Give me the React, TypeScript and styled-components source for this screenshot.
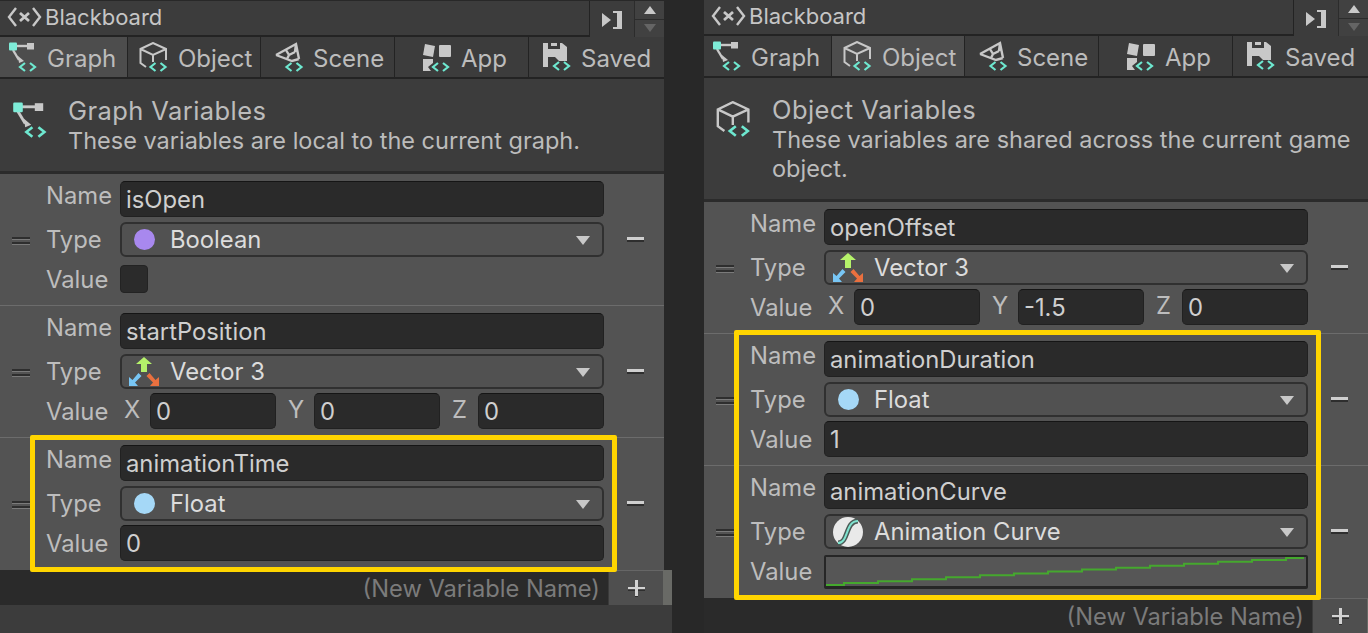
import React from "react";
import styled, { createGlobalStyle } from "styled-components";

const Global = createGlobalStyle`
  html, body { margin: 0; padding: 0; background: #282828; }
  body { font-family: Inter, "Liberation Sans", sans-serif; }
`;

const Page = styled.div`
  width: 1368px;
  height: 633px;
  display: flex;
  gap: 32px;
  overflow: hidden;
  background: #282828;
`;

const Panel = styled.section<{ $first?: boolean }>`
  width: 672px;
  flex: none;
  height: 633px;
  display: flex;
  flex-direction: column;
  padding-top: ${(p) => (p.$first ? "1px" : "0")};
  box-sizing: border-box;
`;

const TopBar = styled.header`
  width: 664px;
  height: 36px;
  display: flex;
  background: #3c3c3c;
  flex: none;
`;

const TitleBox = styled.div`
  width: 589px;
  height: 32px;
  border-right: 1px solid #232323;
  border-bottom: 2px solid #232323;
  display: flex;
  align-items: center;
  padding-bottom: 2px;
`;

const TitleInner = styled.div`
  display: flex;
  align-items: center;
  gap: 3px;
  padding-left: 7px;
  color: #c6c6c6;
  font-size: 22px;
`;

const CollapseSlot = styled.div`
  width: 44px;
  display: flex;
  align-items: center;
  justify-content: center;
  padding-top: 1px;
  padding-left: 1px;
  box-sizing: border-box;
`;

const Stepper = styled.div`
  width: 30px;
  display: flex;
  flex-direction: column;
  gap: 1px;
  background: #2c2c2c;
  padding-left: 1px;
  box-sizing: border-box;
`;

const StepBtn = styled.div<{ $down?: boolean }>`
  flex: 1;
  background: #414141;
  display: flex;
  align-items: center;
  justify-content: center;
  &::after {
    content: "";
    width: 0;
    height: 0;
    border-left: 6.5px solid transparent;
    border-right: 6.5px solid transparent;
    ${(p) => (p.$down ? "border-top: 8px solid #656565;" : "border-bottom: 8px solid #c9c9c9;")}
  }
`;

const TabRow = styled.nav`
  width: 664px;
  height: 42px;
  flex: none;
  display: grid;
  grid-template-columns: 127px 132px 133px 133px 135px;
  column-gap: 1px;
  background: #232323;
  padding-bottom: 2px;
  box-sizing: border-box;
`;

const Tab = styled.div<{ $active?: boolean; $start: number }>`
  background: ${(p) => (p.$active ? "#4d4d4d" : "#3c3c3c")};
  color: #bcbcbc;
  font-size: 24px;
  display: flex;
  align-items: center;
  gap: 9px;
  padding-left: ${(p) => p.$start}px;
  padding-top: 4px;
  box-sizing: border-box;
  line-height: 1;
`;

const TabGlyph = styled.span`
  display: flex;
  margin-top: -4px;
`;

const Intro = styled.div`
  width: 664px;
  flex: none;
  background: #3c3c3c;
  box-sizing: border-box;
  padding: 18px 10px 16px 12px;
  display: flex;
  gap: 20px;
`;

const IntroIcon = styled.div`
  width: 36px;
  flex: none;
  padding-top: 5px;
`;

const IntroText = styled.div`
  line-height: 29px;
`;

const IntroTitle = styled.div`
  color: #bcbcbc;
  font-size: 25.5px;
  letter-spacing: 0.42px;
  margin: -1px 0 1px;
`;

const IntroDesc = styled.div`
  color: #bcbcbc;
  font-size: 23.5px;
`;

const List = styled.div`
  width: 664px;
  flex: none;
  background: #535353;
  border-top: 3px solid #2b2b2b;
  box-sizing: border-box;
`;

const RowGroup = styled.div`
  position: relative;
`;

const Highlight = styled.div<{ $lift: number }>`
  position: absolute;
  left: 30px;
  right: 47px;
  top: -${(p) => p.$lift}px;
  bottom: -2px;
  border: 5px solid #ffd500;
  border-radius: 2px;
  pointer-events: none;
  z-index: 2;
`;

const Row = styled.div<{ $last?: boolean }>`
  height: 132px;
  box-sizing: border-box;
  padding-top: 7px;
  display: grid;
  grid-template-columns: 46px 74px 484px 60px;
  grid-template-rows: 36px 35px 36px;
  row-gap: 4.5px;
  border-bottom: ${(p) => (p.$last ? "0" : "1px solid #6c6c6c")};
  background: #535353;
`;

const Handle = styled.div`
  grid-column: 1;
  grid-row: 1 / 4;
  display: flex;
  flex-direction: column;
  justify-content: center;
  gap: 3px;
  padding-left: 12px;
  padding-top: 2px;
  &::before, &::after {
    content: "";
    display: block;
    width: 18px;
    height: 2px;
    background: #2e2e2e;
    box-shadow: 0 1px 0 #7a7a7a;
  }
`;

const Label = styled.div<{ $drop: number }>`
  grid-column: 2;
  color: #bdbdbd;
  font-size: 23.8px;
  line-height: 30px;
  padding-top: ${(p) => p.$drop}px;
`;

const TextField = styled.div`
  background: #2a2a2a;
  border: 1px solid #212121;
  border-top-color: #151515;
  border-radius: 5px;
  box-sizing: border-box;
  color: #cfcfcf;
  font-size: 23.8px;
  padding-left: 5px;
  height: 36px;
  line-height: 35px;
  min-width: 0;
`;

const Select = styled.div`
  background: #515151;
  border: 2px solid #303030;
  border-radius: 6px;
  box-sizing: border-box;
  color: #dcdcdc;
  font-size: 23.8px;
  display: flex;
  align-items: center;
  height: 35px;
  padding: 1px 12px 0 0;
`;

const SelectIcon = styled.div`
  width: 48px;
  flex: none;
  display: flex;
  align-items: center;
  justify-content: center;
  padding-right: 4px;
  box-sizing: border-box;
`;

const SelectText = styled.span`
  flex: 1;
`;

const Caret = styled.span`
  width: 0;
  height: 0;
  border-left: 7.5px solid transparent;
  border-right: 7.5px solid transparent;
  border-top: 9px solid #c8c8c8;
  margin-top: 1px;
`;

const Dot = styled.span<{ $color: string }>`
  width: 21px;
  height: 21px;
  border-radius: 50%;
  background: ${(p) => p.$color};
`;

const Checkbox = styled.div`
  width: 28px;
  height: 28px;
  margin-top: 4px;
  background: #2b2b2b;
  border: 1px solid #232323;
  border-radius: 4px;
  box-sizing: border-box;
`;

const VecGrid = styled.div`
  display: grid;
  grid-template-columns: repeat(3, 156px);
  column-gap: 8px;
`;

const VecCell = styled.div`
  display: grid;
  grid-template-columns: 30px 126px;
`;

const VecLabel = styled.span`
  color: #bdbdbd;
  font-size: 23.8px;
  line-height: 34px;
  padding-left: 4px;
`;

const CurveField = styled.div`
  height: 34px;
  margin-top: 2px;
  background: #565656;
  border: 2px solid #262626;
  border-bottom-width: 3px;
  box-sizing: border-box;
  border-radius: 2px;
`;

const RemoveCell = styled.div`
  grid-column: 4;
  grid-row: 1 / 4;
  display: flex;
  align-items: center;
  padding-left: 23px;
  padding-top: 2px;
`;

const Footer = styled.div`
  width: 672px;
  height: 35px;
  flex: none;
  display: flex;
  background: #2a2a2a;
`;

const NewName = styled.div`
  width: 608px;
  box-sizing: border-box;
  background: #2a2a2a;
  color: #7b7b7b;
  text-align: right;
  padding-right: 8px;
  font-size: 23.7px;
  line-height: 37px;
`;

const AddButton = styled.div`
  width: 55px;
  background: #4f4f4f;
  border-top: 1px solid #666;
  border-left: 1px solid #3a3a3a;
  box-sizing: border-box;
  display: flex;
  align-items: center;
  justify-content: center;
`;

const AddSliver = styled.div`
  width: 9px;
  background: #696a66;
`;

const Rest = styled.div`
  width: 672px;
  flex: 1;
  background: #3c3c3c;
`;

const PlotSvg = styled.svg`
  display: block;
`;

const teal = "#6ee8d0";
const grey = "#c8c8c8";

const Brackets = ({ x = 0, y = 0 }: { x?: number; y?: number }) => (
  <g fill="none" stroke={teal} strokeWidth="2.2" transform={`translate(${x} ${y})`}>
    <polyline points="7,0 2,4 7,8" />
    <polyline points="12,0 17,4 12,8" />
  </g>
);

const GraphGlyph = ({ size = 30 }: { size?: number }) => (
  <svg width={size} height={size} viewBox="0 0 30 30">
    <path d="M5 4H21" stroke={grey} strokeWidth="2.4" />
    <path d="M5 8L11 18" stroke={grey} strokeWidth="2.4" />
    <rect x="19" y="1" width="7" height="6.5" fill={grey} />
    <polygon points="10,14 16,19 11,21" fill={grey} />
    <rect x="1" y="0.5" width="8" height="8" rx="1" fill="#7eecd8" />
    <Brackets x={10} y={21} />
  </svg>
);

const CubeGlyph = ({ size = 30 }: { size?: number }) => (
  <svg width={size} height={size} viewBox="0 0 30 30">
    <path
      d="M7 25L1.5 21V7L14 1L27 7V18M1.5 7L14 13L27 7M14 13V20"
      fill="none"
      stroke={grey}
      strokeWidth="2"
    />
    <Brackets x={9.5} y={21} />
  </svg>
);

const SceneGlyph = () => (
  <svg width="30" height="30" viewBox="0 0 30 30">
    <path
      d="M2 13L22 2L25 17M2 13L18 19L25 17M12 8L15 13M15 13L21 10M15 13L13 17M22 2L21 10"
      fill="none"
      stroke={grey}
      strokeWidth="2.4"
    />
    <Brackets x={10.5} y={21} />
  </svg>
);

const AppGlyph = () => (
  <svg width="30" height="30" viewBox="0 0 30 30">
    <polygon points="3,2 13,4 11,15 1,13" fill={grey} />
    <rect x="17" y="3" width="12" height="12" rx="1" fill={grey} />
    <polygon points="1,17 11,17 11,21 6,25 9,29 1,29" fill={grey} />
    <Brackets x={9} y={21} />
  </svg>
);

const SaveGlyph = () => (
  <svg width="30" height="30" viewBox="0 0 30 30">
    <path
      d="M1 1H6V7H18V1H20L25 5V19H17L13 15H6V25H1ZM9 1H15V4H9Z"
      fill={grey}
    />
    <Brackets x={10} y={20} />
  </svg>
);

const VarsGlyph = () => (
  <svg width="35" height="24" viewBox="0 0 35 24" fill="none" stroke={grey} strokeWidth="2.4">
    <polyline points="9,3 2,12 9,21" />
    <polyline points="26,3 33,12 26,21" />
    <path d="M13 8L22 16M22 8L13 16" strokeWidth="2.8" />
  </svg>
);

const CollapseGlyph = () => (
  <svg width="21" height="20" viewBox="0 0 21 20">
    <polygon points="0,3 9,10 0,17" fill="#c8c8c8" />
    <path d="M11 1H20V19H11V17H15V3H11Z" fill="#c8c8c8" />
  </svg>
);

const VectorGlyph = () => (
  <svg width="32" height="32" viewBox="0 0 32 32">
    <path d="M16 1L24 8H19V16H13V8H8Z" fill="#b5f26a" />
    <path d="M13.5 20L7 26.5L10 30H1V21L4.5 24L10.5 17Z" fill="#78c6f5" />
    <path d="M18.5 20L25 26.5L22 30H31V21L27.5 24L21.5 17Z" fill="#e9703f" />
  </svg>
);

const CurveGlyph = () => (
  <svg width="30" height="30" viewBox="0 0 30 30">
    <circle cx="15" cy="15" r="15" fill="#e9e9e9" />
    <path d="M5 26C16 26 12 4 25 4" fill="none" stroke="#4b5a56" strokeWidth="5" />
    <path d="M5 26C16 26 12 4 25 4" fill="none" stroke="#7fe3cf" strokeWidth="2" />
  </svg>
);

const PlusGlyph = () => (
  <svg width="17" height="18" viewBox="0 0 17 18">
    <path d="M0 8H17V10H0ZM7 1H10V17H7Z" fill="#d2d2d2" />
    <path d="M0 11H7V12H0ZM10 11H17V12H10ZM7 17H10V18H7Z" fill="#2e2e2e" />
  </svg>
);

const MinusGlyph = () => (
  <svg width="17" height="6" viewBox="0 0 17 6">
    <rect y="0" width="17" height="3" fill="#cfcfcf" />
    <rect y="3" width="17" height="2" fill="#2e2e2e" />
  </svg>
);

const curvePts = (() => {
  const pts: string[] = [];
  for (let i = 0; i < 15; i++) {
    const y = 28 - i * 1.93;
    const x0 = i === 0 ? 0 : 18 + (i - 1) * 34;
    const x1 = i === 14 ? 478 : 18 + i * 34;
    pts.push(`${x0},${y}`, `${x1},${y}`);
  }
  return pts.join(" ");
})();

const CurvePlot = () => (
  <PlotSvg width="478" height="29" viewBox="0 0 478 29">
    <polyline points={curvePts} fill="none" stroke="#45a82e" strokeWidth="2" />
  </PlotSvg>
);

const Vector = ({ x, y, z }: { x: string; y: string; z: string }) => (
  <VecGrid>
    {[["X", x], ["Y", y], ["Z", z]].map(([l, v]) => (
      <VecCell key={l}>
        <VecLabel>{l}</VecLabel>
        <TextField>{v}</TextField>
      </VecCell>
    ))}
  </VecGrid>
);

type Variable = { name: string; type: string; icon: React.ReactNode; value: React.ReactNode };

const VarRow = ({ v, last }: { v: Variable; last?: boolean }) => (
  <Row $last={last}>
    <Handle />
    <Label $drop={0}>Name</Label>
    <TextField>{v.name}</TextField>
    <RemoveCell>
      <MinusGlyph />
    </RemoveCell>
    <Label $drop={3}>Type</Label>
    <Select>
      <SelectIcon>{v.icon}</SelectIcon>
      <SelectText>{v.type}</SelectText>
      <Caret />
    </Select>
    <Label $drop={4}>Value</Label>
    {v.value}
  </Row>
);

const TabBar = ({ active }: { active: string }) => (
  <TabRow>
    <Tab $active={active === "Graph"} $start={8}><TabGlyph><GraphGlyph /></TabGlyph>Graph</Tab>
    <Tab $active={active === "Object"} $start={11}><TabGlyph><CubeGlyph /></TabGlyph>Object</Tab>
    <Tab $active={active === "Scene"} $start={13}><TabGlyph><SceneGlyph /></TabGlyph>Scene</Tab>
    <Tab $active={active === "App"} $start={27}><TabGlyph><AppGlyph /></TabGlyph>App</Tab>
    <Tab $active={active === "Saved"} $start={13}><TabGlyph><SaveGlyph /></TabGlyph>Saved</Tab>
  </TabRow>
);

const Window = ({
  first,
  active,
  icon,
  title,
  desc,
  plain,
  marked,
}: {
  first?: boolean;
  active: string;
  icon: React.ReactNode;
  title: string;
  desc: string;
  plain: Variable[];
  marked: Variable[];
}) => (
  <Panel $first={first}>
    <TopBar>
      <TitleBox>
        <TitleInner><VarsGlyph />Blackboard</TitleInner>
      </TitleBox>
      <CollapseSlot><CollapseGlyph /></CollapseSlot>
      <Stepper>
        <StepBtn />
        <StepBtn $down />
      </Stepper>
    </TopBar>
    <TabBar active={active} />
    <Intro>
      <IntroIcon>{icon}</IntroIcon>
      <IntroText>
        <IntroTitle>{title}</IntroTitle>
        <IntroDesc>{desc}</IntroDesc>
      </IntroText>
    </Intro>
    <List>
      {plain.map((v) => <VarRow key={v.name} v={v} />)}
      <RowGroup>
        {marked.map((v, i) => <VarRow key={v.name} v={v} last={i === marked.length - 1} />)}
        <Highlight $lift={first ? 3 : 4} />
      </RowGroup>
    </List>
    <Footer>
      <NewName>(New Variable Name)</NewName>
      <AddButton><PlusGlyph /></AddButton>
      <AddSliver />
    </Footer>
    <Rest />
  </Panel>
);

const floatIcon = <Dot $color="#a5d8f7" />;

export default function App() {
  return (
    <Page>
      <Global />
      <Window
        first
        active="Graph"
        icon={<GraphGlyph size={36} />}
        title="Graph Variables"
        desc="These variables are local to the current graph."
        plain={[
          { name: "isOpen", type: "Boolean", icon: <Dot $color="#a888ee" />, value: <Checkbox /> },
          { name: "startPosition", type: "Vector 3", icon: <VectorGlyph />, value: <Vector x="0" y="0" z="0" /> },
        ]}
        marked={[
          { name: "animationTime", type: "Float", icon: floatIcon, value: <TextField>0</TextField> },
        ]}
      />
      <Window
        active="Object"
        icon={<CubeGlyph size={36} />}
        title="Object Variables"
        desc="These variables are shared across the current game object."
        plain={[
          { name: "openOffset", type: "Vector 3", icon: <VectorGlyph />, value: <Vector x="0" y="-1.5" z="0" /> },
        ]}
        marked={[
          { name: "animationDuration", type: "Float", icon: floatIcon, value: <TextField>1</TextField> },
          { name: "animationCurve", type: "Animation Curve", icon: <CurveGlyph />, value: <CurveField><CurvePlot /></CurveField> },
        ]}
      />
    </Page>
  );
}
